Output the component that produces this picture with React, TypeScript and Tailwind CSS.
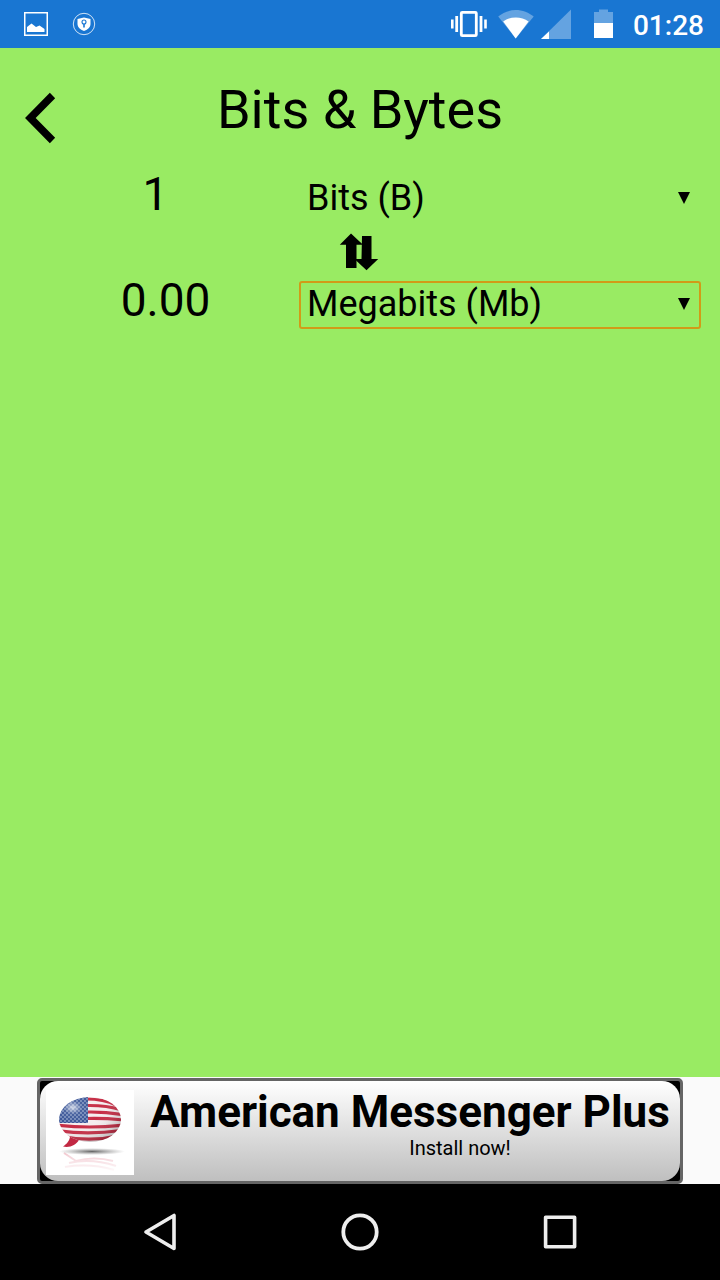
function StatusBar() {
  return (
    <header className="flex h-12 items-center justify-between bg-[#1976d2] pl-6 pr-4 text-white">
      <div className="flex items-center gap-6">
        <svg className="h-6 w-6" viewBox="0 0 24 24" fill="none">
          <rect x="0.75" y="0.75" width="22.5" height="22.5" stroke="white" strokeWidth="1.5" />
          <path d="M3 20V15L7.5 11.500L12 15L15.500 13.500L20.500 17V20Z" fill="white" />
        </svg>
        <svg className="h-6 w-6" viewBox="0 0 24 24" fill="none">
          <circle cx="12" cy="12" r="10.7" stroke="white" strokeWidth="1" opacity="0.8" />
          <path d="M12 5.500L18.500 7V12C18.500 15.500 15 18 12 19C9 18 5.500 15.500 5.500 12V7Z" fill="white" />
          <circle cx="12" cy="10" r="2" stroke="#1976d2" strokeWidth="1.1" />
          <path d="M12 12V15.5" stroke="#1976d2" strokeWidth="1.6" />
        </svg>
      </div>

      <div className="flex items-center">
        <svg className="h-12 w-[180px]" viewBox="0 0 180 48" fill="none">
          {/* vibrate */}
          <rect x="21.300" y="12.300" width="15" height="23.400" rx="1" stroke="white" strokeWidth="2.800" />
          <path d="M16.700 16V32M41 16V32" stroke="white" strokeWidth="2.800" />
          <path d="M12.300 19.500V28.500M45.500 19.500V28.500" stroke="white" strokeWidth="2.600" />
          {/* wifi */}
          <path d="M75.700 38.500L58.200 16.500C62.700 12.700 69.200 10 75.700 10S89.200 12.700 93.700 16.500Z" fill="white" fillOpacity="0.33" />
          <path d="M75.700 38.500L63.200 21.500C70 16.200 81.500 16.200 88.600 21.500Z" fill="white" />
          {/* signal */}
          <path d="M101 39L131 9.500V39Z" fill="white" fillOpacity="0.33" />
          <path d="M101 39L109 31.500V39Z" fill="white" />
          {/* battery */}
          <path d="M154 12H159V9.500H168V12H173V23H154Z" fill="white" fillOpacity="0.33" />
          <path d="M154 23H173V38H154Z" fill="white" />
        </svg>
        <span className="ml-[13px] mt-1 text-[28px] font-medium leading-[46px]">01:28</span>
      </div>
    </header>
  );
}

type RowProps = {
  value: string;
  unit: string;
  valueClass: string;
  boxClass: string;
};

function UnitRow({ value, unit, valueClass, boxClass }: RowProps) {
  return (
    <div className="flex h-12">
      <div className={`-mt-[5px] w-[299px] text-center text-[46px] leading-[48px] ${valueClass}`}>{value}</div>
      <div className={`flex w-[402px] items-center justify-between rounded-[3px] border-2 pl-1.5 pr-[9px] ${boxClass}`}>
        <span className="-mt-[3px] text-[36px] leading-[44px]">{unit}</span>
        <svg className="-mt-[3px] h-3 w-3" viewBox="0 0 12 12">
          <path d="M0 0H12L6 12Z" />
        </svg>
      </div>
    </div>
  );
}

function FlagBubble() {
  return (
    <svg className="h-[85px] w-[88px]" viewBox="0 0 88 85">
      <defs>
        <clipPath id="bubble">
          <ellipse cx="44" cy="29.500" rx="31" ry="22.500" />
        </clipPath>
        <radialGradient id="shine" cx="0.24" cy="0.27" r="0.8">
          <stop offset="0" stopColor="white" stopOpacity="0.75" />
          <stop offset="0.16" stopColor="white" stopOpacity="0.1" />
          <stop offset="0.5" stopColor="white" stopOpacity="0" />
          <stop offset="1" stopColor="black" stopOpacity="0.25" />
        </radialGradient>
        <radialGradient id="shadow">
          <stop offset="0" stopColor="#555" stopOpacity="0.9" />
          <stop offset="1" stopColor="#888" stopOpacity="0" />
        </radialGradient>
        <linearGradient id="fade" x1="0" y1="0" x2="0" y2="1">
          <stop offset="0" stopColor="white" stopOpacity="0.1" />
          <stop offset="1" stopColor="white" />
        </linearGradient>
        <pattern id="stars" width="4" height="4" patternUnits="userSpaceOnUse">
          <rect width="4" height="4" fill="#365295" />
          <circle cx="1" cy="1" r="0.65" fill="#dce5f5" />
          <circle cx="3" cy="3" r="0.65" fill="#dce5f5" />
        </pattern>
      </defs>
      <rect width="88" height="85" fill="white" />
      <path d="M24 46C24 50 21 54 17 56.500C24 58 30 55 33 50Z" fill="#c22843" />
      <g clipPath="url(#bubble)">
        <rect width="88" height="60" fill="#f5edef" />
        <g fill="none" stroke="#c62c45" strokeWidth="3.100">
          <path d="M40 9Q58 9 70 15" />
          <path d="M40 15.500Q60 15 76 20" />
          <path d="M40 22Q60 21.500 78 25" />
          <path d="M40 28.500Q60 28 78 30" />
          <path d="M10 35Q43 39 78 35" />
          <path d="M10 40.500Q43 45.500 78 40" />
          <path d="M14 46Q44 52.500 74 45.500" />
        </g>
        <rect x="10" y="4" width="32" height="29" fill="url(#stars)" />
        <rect x="10" y="4" width="70" height="50" fill="url(#shine)" />
      </g>
      <ellipse cx="46" cy="61.500" rx="33" ry="3.500" fill="url(#shadow)" />
      {/* faint reflection under the bubble */}
      <g fill="none" stroke="#d85a70" strokeWidth="2" opacity="0.3">
        <path d="M18 63L30 71Q48 66 67 71" />
        <path d="M23 73Q45 68 70 76" />
        <path d="M19 77Q44 73 68 80" />
      </g>
      <rect x="8" y="65" width="72" height="18" fill="url(#fade)" />
    </svg>
  );
}

function AdBanner() {
  return (
    <div className="flex h-[107px] justify-center bg-[#fafafa] pt-px">
      <div className="h-[106px] w-[646px] rounded-[5px] border-[3px] border-[#656565] bg-black">
        <div className="flex h-[100px] rounded-[18px] bg-linear-to-b from-white to-[#bfbfbf] pl-1.5">
          <div className="pt-[9px]">
            <FlagBubble />
          </div>
          <div className="ml-4 w-[520px] pt-[5px]">
            <p className="whitespace-nowrap text-center text-[44px] font-bold leading-[52px]">American Messenger Plus</p>
            <p className="pl-[100px] text-center text-[20px] leading-5">Install now!</p>
          </div>
        </div>
      </div>
    </div>
  );
}

function NavBar() {
  return (
    <nav className="flex h-24 items-center justify-center gap-[160px] bg-black">
      <svg className="h-10 w-10" viewBox="0 0 40 40" fill="none" stroke="#eeeeee" strokeWidth="3.600" strokeLinejoin="round">
        <path d="M6 20L34 3.500V36.500Z" />
      </svg>
      <svg className="h-10 w-10" viewBox="0 0 40 40" fill="none" stroke="#eeeeee" strokeWidth="3.800">
        <circle cx="20" cy="20" r="16.700" />
      </svg>
      <svg className="h-10 w-10" viewBox="0 0 40 40" fill="none" stroke="#eeeeee" strokeWidth="3.600" strokeLinejoin="round">
        <rect x="5.600" y="5.300" width="29" height="29.500" />
      </svg>
    </nav>
  );
}

export default function App() {
  return (
    <div className="flex h-[1280px] w-[720px] flex-col overflow-hidden bg-[#99eb63] font-['Roboto',sans-serif] text-black">
      <StatusBar />

      <main className="flex-1">
        <div className="flex h-[127px] items-start">
          <button className="ml-6 mt-[44px] h-[52px] w-8">
            <svg className="h-[52px] w-8" viewBox="0 0 32 52" fill="none" stroke="black" strokeWidth="7.500">
              <path d="M28.500 3.500L6.300 26L28.500 48.500" />
            </svg>
          </button>
          <h1 className="mr-14 mt-8 flex-1 text-center text-[54px] leading-[60px]">Bits &amp; Bytes</h1>
        </div>

        <UnitRow value="1" unit="Bits (B)" valueClass="pl-[12px]" boxClass="border-transparent" />
        <div className="flex h-[58px] items-center pl-[339px]">
          <svg className="h-[38px] w-10" viewBox="0 0 40 38">
            <path d="M12 0.500L24 11.800H17.500V35H7V11.800H0.800Z" />
            <path d="M23 3H32.500V26H39.200L27.500 37.300L15.500 26H22.500Z" />
          </svg>
        </div>
        <UnitRow value="0.00" unit="Megabits (Mb)" valueClass="pl-[32px]" boxClass="border-[#d19b17]" />
      </main>

      <AdBanner />
      <NavBar />
    </div>
  );
}
